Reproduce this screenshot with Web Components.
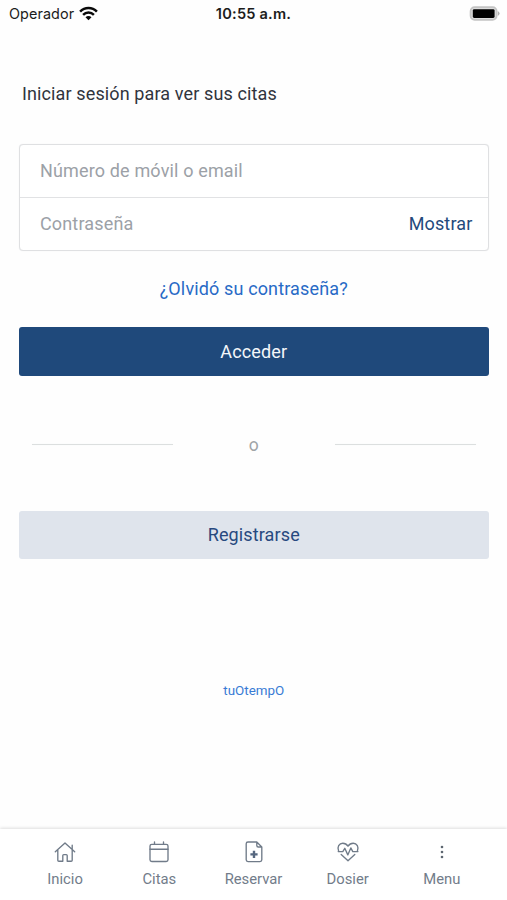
<!DOCTYPE html>
<html lang="es">
<head>
<meta charset="utf-8">
<title>Iniciar sesión</title>
<style>
  html, body { margin: 0; height: 100%; background: #fefefe; }
  body { font-family: Roboto, "Liberation Sans", sans-serif; overflow: hidden; }
</style>
</head>
<body>
<login-screen></login-screen>
<script>
const define = (name, html) => customElements.define(name, class extends HTMLElement {
  constructor() {
    super();
    const t = document.createElement('template');
    t.innerHTML = html;
    this.attachShadow({ mode: 'open' }).append(t.content.cloneNode(true));
  }
});

define('status-bar', `
<style>
  :host { display: grid; grid-template-columns: 1fr auto 1fr; align-items: center; height: 28px; padding: 0 6px 0 9px; box-sizing: border-box; font: 14.4px/28px Inter, sans-serif; color: #1c1c1c; }
  .left { display: flex; align-items: center; gap: 5px; letter-spacing: .08px; }
  .time { font-weight: 600; font-size: 14.6px; letter-spacing: .2px; margin-right: 3px; }
  .battery { justify-self: end; display: block; }
  .wifi { display: block; margin-top: -2px; }
</style>
<div class="left"><span>Operador</span>
  <svg class="wifi" width="19" height="15" viewBox="0 0 19 15" fill="none" stroke="#0a0a0a" stroke-width="2.5">
    <path d="M1.1 5.6C5.8.8 13.2.8 17.9 5.6M4.1 8.8c3-3 7.8-3 10.8 0"/><path d="M9.5 14.3 6.5 11.3c1.7-1.6 4.3-1.6 6 0Z" fill="#0a0a0a" stroke="none"/>
  </svg></div>
<span class="time">10:55 a.m.</span>
<svg class="battery" width="32" height="16" viewBox="0 0 32 16"><rect x="1.6" y="1.2" width="26" height="12.6" rx="4" fill="#ddd" stroke="#c4c4c4" stroke-width="1.8"/><rect x="3.8" y="3.2" width="21.8" height="8.8" rx="1.4" fill="#000"/><path d="M28.8 5q3.6 2.5 0 5Z" fill="#b0b0b0"/></svg>`);

define('credential-row', `
<style>
  :host { display: flex; align-items: center; justify-content: space-between; padding: 0 15px 0 20px; box-sizing: border-box; height: 52px; font-size: 18px; line-height: 24px; letter-spacing: .15px; color: #9ca1a7; }
  ::slotted([slot=action]) { color: #24497c; }
</style><slot></slot><slot name="action"></slot>`);

define('credential-box', `
<style>
  :host { display: block; border: 1px solid #dfe0e2; box-shadow: 0 0 1px #e4e5e7; border-radius: 4px; background: #fff; }
  ::slotted(:last-child) { border-top: 1px solid #e1e2e4; height: 53px !important; }
</style><slot></slot>`);

define('action-button', `
<style>
  :host { display: flex; align-items: center; justify-content: center; height: 49px; border-radius: 3px; background: #1f497b; color: #f4f7fa; font-size: 18px; letter-spacing: .12px; }
  :host([secondary]) { background: #dfe4ec; color: #27497f; height: 48px; padding-bottom: 1px; box-sizing: border-box; }
</style><slot></slot>`);

define('or-divider', `
<style>
  :host { display: grid; grid-template-columns: 141px 1fr 141px; align-items: center; padding: 0 13px; font-size: 17.5px; line-height: 24px; color: #a0a4a7; text-align: center; }
  i { height: 1px; background: #dcdfdf; box-shadow: 0 0 1px #eceeee; margin-bottom: 1px; }
</style><i></i><slot></slot><i></i>`);

define('nav-item', `
<style>
  :host { display: flex; flex-direction: column; align-items: center; flex: 1; color: #727c8a; font-size: 14.8px; line-height: 20px; }
  ::slotted(svg) { display: block; width: 24px; height: 24px; margin-bottom: 5px; fill: none; stroke: #707b89; stroke-width: 1.35; stroke-linejoin: round; stroke-linecap: round; }
</style><slot name="icon"></slot><slot></slot>`);

define('bottom-nav', `
<style>
  :host { display: flex; height: 71px; padding: 10.5px 18px 0; box-sizing: border-box; background: #fff; box-shadow: 0 -1px 3px rgba(0,0,0,.13); }
</style><slot></slot>`);

define('login-screen', `
<style>
  :host { display: flex; flex-direction: column; height: 900px; width: 507px; }
  main { flex: 1; display: flex; flex-direction: column; padding: 0 18.5px 0 19px; }
  h1 { margin: 54px 0 38px 3px; font-size: 18px; line-height: 24px; font-weight: 400; letter-spacing: .12px; color: #30343d; }
  a { text-align: center; }
  .forgot { margin: 26px 0 26px; font-size: 18px; line-height: 24px; letter-spacing: .14px; color: #286ac6; }
  or-divider { margin: 57px 0 54px; }
  .brand { margin-top: 122.5px; font-size: 13.4px; line-height: 18px; color: #387bd5; }
</style>
<status-bar></status-bar>
<main>
  <h1>Iniciar sesión para ver sus citas</h1>
  <credential-box>
    <credential-row>Número de móvil o email</credential-row>
    <credential-row>Contraseña<span slot="action">Mostrar</span></credential-row>
  </credential-box>
  <a class="forgot">¿Olvidó su contraseña?</a>
  <action-button>Acceder</action-button>
  <or-divider>o</or-divider>
  <action-button secondary>Registrarse</action-button>
  <a class="brand">tuOtempO</a>
</main>
<bottom-nav>
  <nav-item><svg slot="icon" viewBox="0 0 24 24"><path d="M2.3 11.8 12 3l9.7 8.8M4.8 10v10.2q0 1 1 1h4V15.6q0-1 1-1h2.4q1 0 1 1v5.6h4q1 0 1-1V5.2"/></svg>Inicio</nav-item>
  <nav-item><svg slot="icon" viewBox="0 0 24 24"><rect x="3" y="4.3" width="18" height="17.2" rx="1.8"/><path d="M3 9.2h18M7.500 2v2.300M16.500 2v2.300"/></svg>Citas</nav-item>
  <nav-item><svg slot="icon" viewBox="0 0 24 24"><path d="M14.800 2H6q-1.800 0-1.800 1.800v16q0 1.800 1.800 1.800h12q1.800 0 1.800-1.800V7Zm0 0v3.500q0 1.500 1.500 1.500h3.500"/><path d="M12 10.800v7.200M8.400 14.400h7.200" stroke-width="2.4" stroke="#56677f" stroke-linecap="butt"/></svg>Reservar</nav-item>
  <nav-item><svg slot="icon" viewBox="0 0 24 24"><path d="M2.700 11.500C.6 7 3.300 3.200 6.800 3.200c2.300 0 4 1.200 5.200 3 1.200-1.800 2.900-3 5.200-3 3.500 0 6.200 3.800 4.100 8.300M5.200 14.400l6.800 6.400 6.800-6.400M2.200 11.600h4.600l2-3.300 3 6.600 3-7 2 3.700h5.200"/></svg>Dosier</nav-item>
  <nav-item><svg slot="icon" viewBox="0 0 24 24"><g fill="#5d6670" stroke="none"><circle cx="12" cy="7" r="1.300"/><circle cx="12" cy="12" r="1.300"/><circle cx="12" cy="17" r="1.300"/></g></svg>Menu</nav-item>
</bottom-nav>`);
</script>
</body>
</html>
